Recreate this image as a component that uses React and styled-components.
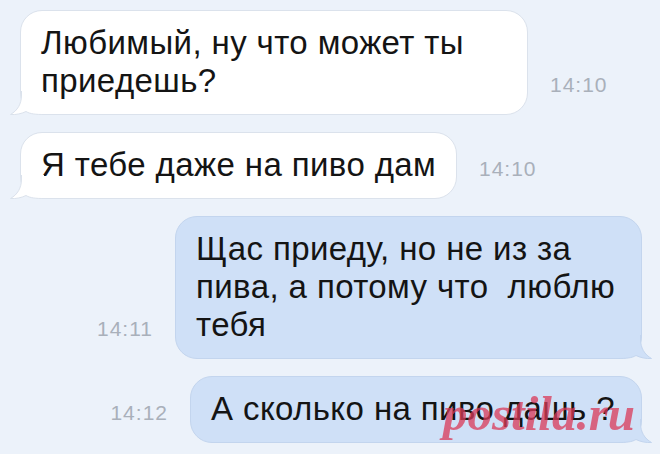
import React from "react";
import styled, { createGlobalStyle } from "styled-components";

const Global = createGlobalStyle`
  html, body { margin: 0; padding: 0; background: #ecf2fa; }
  body { width: 660px; height: 454px; overflow: hidden; }
`;

const Page = styled.div`
  position: relative;
  width: 660px;
  height: 454px;
  box-sizing: border-box;
  padding-top: 10px;
  display: flex;
  flex-direction: column;
  gap: 17px;
  background: #ecf2fa;
  font-family: "Liberation Sans", Arial, sans-serif;
`;

const Row = styled.div`
  display: flex;
  align-items: flex-end;
  justify-content: ${(p) => (p.$out ? "flex-end" : "flex-start")};
  padding: ${(p) => (p.$out ? "0 18px 0 0" : "0 0 0 20px")};
`;

const Bubble = styled.div`
  position: relative;
  box-sizing: border-box;
  width: ${(p) => p.$w}px;
  padding: 13px 18px 14px 20px;
  border-radius: 22px;
  background: ${(p) => (p.$out ? "#cfe0f7" : "#ffffff")};
  border: 1px solid ${(p) => (p.$out ? "#c3d5ee" : "#dbe2ec")};
  color: #141414;
  font-size: 33px;
  letter-spacing: 0.4px;
  line-height: 38px;
`;

const Line = styled.div`
  white-space: pre;
`;

const Time = styled.span`
  flex: none;
  margin: ${(p) => (p.$out ? "0 22px 0 0" : "0 0 0 22px")};
  padding-bottom: 19px;
  font-size: 21px;
  letter-spacing: 1px;
  color: #a9b0ba;
  line-height: 22px;
`;

const TailSvg = styled.svg`
  position: absolute;
  bottom: -1px;
  ${(p) => (p.$out ? "right: -11px; transform: scaleX(-1);" : "left: -11px;")}
`;

const Tail = ({ out }) => {
  const fill = out ? "#cfe0f7" : "#ffffff";
  const stroke = out ? "#c3d5ee" : "#dbe2ec";
  const outline =
    "M11.5 0 L11.5 4 C11.5 13 7.5 19.5 0.5 23.5 C6 24 12 22.5 16 20.5 C20 23 26 23.5 34 23.5";
  return (
    <TailSvg $out={out} width="34" height="24" viewBox="0 0 34 24">
      <path d={outline + " L34 0 Z"} fill={fill} />
      <path d={outline} fill="none" stroke={stroke} strokeWidth="1" />
    </TailSvg>
  );
};

const Watermark = styled.div`
  position: absolute;
  left: 443px;
  top: 389px;
  font-family: "Liberation Serif", "Times New Roman", serif;
  font-style: italic;
  font-weight: bold;
  font-size: 49px;
  color: rgba(218, 58, 88, 0.75);
  line-height: 49px;
  pointer-events: none;
`;

const messages = [
  { out: false, w: 508, time: "14:10", lines: ["Любимый, ну что может ты", "приедешь?"] },
  { out: false, w: 437, time: "14:10", lines: ["Я тебе даже на пиво дам"] },
  {
    out: true,
    w: 467,
    time: "14:11",
    lines: ["Щас приеду, но не из за", "пива, а потому что  люблю", "тебя"],
  },
  { out: true, w: 452, time: "14:12", lines: ["А сколько на пиво дашь ?"] },
];

export default function App() {
  return (
    <>
      <Global />
      <Page>
        {messages.map((m, i) => (
          <Row key={i} $out={m.out}>
            {m.out && <Time $out>{m.time}</Time>}
            <Bubble $out={m.out} $w={m.w}>
              {m.lines.map((l, j) => (
                <Line key={j}>{l}</Line>
              ))}
              <Tail out={m.out} />
            </Bubble>
            {!m.out && <Time>{m.time}</Time>}
          </Row>
        ))}
        <Watermark>postila.ru</Watermark>
      </Page>
    </>
  );
}
